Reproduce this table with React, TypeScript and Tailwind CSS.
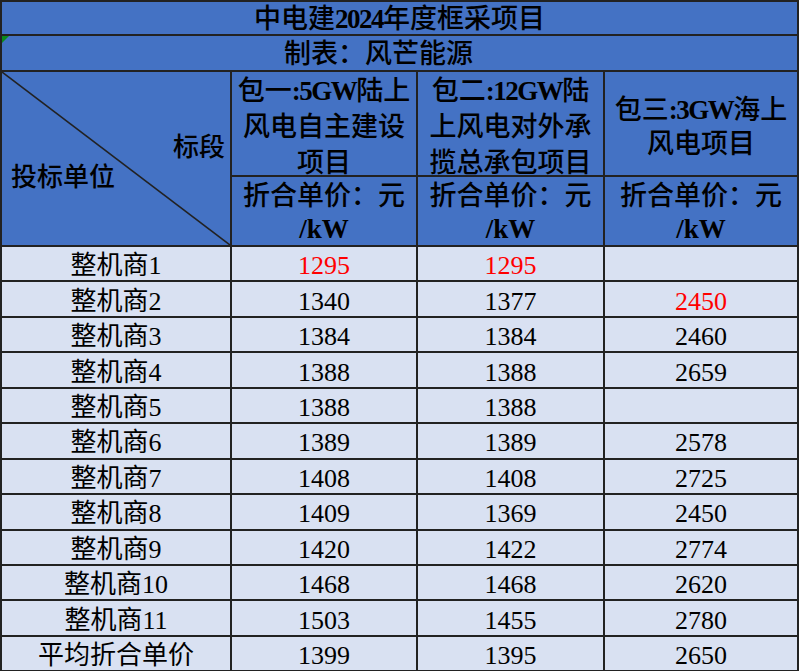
import React from 'react';

const rows: { name: string; a: string; b: string; c: string; red?: ('a' | 'b' | 'c')[] }[] = [
  { name: '整机商1', a: '1295', b: '1295', c: '', red: ['a', 'b'] },
  { name: '整机商2', a: '1340', b: '1377', c: '2450', red: ['c'] },
  { name: '整机商3', a: '1384', b: '1384', c: '2460' },
  { name: '整机商4', a: '1388', b: '1388', c: '2659' },
  { name: '整机商5', a: '1388', b: '1388', c: '' },
  { name: '整机商6', a: '1389', b: '1389', c: '2578' },
  { name: '整机商7', a: '1408', b: '1408', c: '2725' },
  { name: '整机商8', a: '1409', b: '1369', c: '2450' },
  { name: '整机商9', a: '1420', b: '1422', c: '2774' },
  { name: '整机商10', a: '1468', b: '1468', c: '2620' },
  { name: '整机商11', a: '1503', b: '1455', c: '2780' },
  { name: '平均折合单价', a: '1399', b: '1395', c: '2650' },
];

const font = "font-['Liberation_Serif','Noto_Sans_CJK_SC',serif]";

// latin bits in the header stay bold, CJK gets a lighter weight
function L({ children }: { children: React.ReactNode }) {
  return <span className="font-bold tracking-[-1.5px]">{children}</span>;
}

export default function App() {
  return (
    <div className={`w-[800px] h-[671px] overflow-hidden bg-white text-black ${font}`}>
      <div className="grid w-[799px] gap-[2px] bg-[#222] p-[2px] grid-cols-[228px_184px_185px_192px] grid-rows-[32px_34px_103px_68px_repeat(12,33.45px)]">
        {/* title rows */}
        <div className="col-span-4 flex items-center justify-center bg-[#4472c4] pt-[3px] text-[27px] font-medium leading-none">
          中电建<L>2024</L>年度框采项目
        </div>
        <div className="relative col-span-4 flex items-center justify-center bg-[#4472c4] pr-[42px] pt-[3px] text-[27px] font-medium leading-none">
          <span className="absolute left-0 top-0 h-0 w-0 border-r-[7px] border-t-[7px] border-r-transparent border-t-[#0a8a1a]"></span>
          制表：风芒能源
        </div>

        {/* header */}
        <div className="relative row-span-2 flex flex-col justify-center bg-[#4472c4] text-[26px] font-medium leading-[30px]">
          <svg className="absolute inset-0 h-full w-full" preserveAspectRatio="none" viewBox="0 0 228 173">
            <line x1="0" y1="0" x2="228" y2="173" stroke="#222" strokeWidth="1.6" />
          </svg>
          <span className="mt-[8px] self-end pr-[5px]">标段</span>
          <span className="self-start pl-[9px]">投标单位</span>
        </div>
        <div className="flex flex-col items-center justify-center bg-[#4472c4] pt-[6px] text-[27px] font-medium leading-[36px] whitespace-nowrap">
          <span>包一<L>:5GW</L>陆上</span>
          <span>风电自主建设</span>
          <span>项目</span>
        </div>
        <div className="flex flex-col items-center justify-center bg-[#4472c4] pt-[6px] text-[27px] font-medium leading-[36px] whitespace-nowrap">
          <span>包二<L>:12GW</L>陆</span>
          <span>上风电对外承</span>
          <span>揽总承包项目</span>
        </div>
        <div className="flex flex-col items-center justify-center bg-[#4472c4] pt-[6px] text-[27px] font-medium leading-[34px] whitespace-nowrap">
          <span>包三<L>:3GW</L>海上</span>
          <span>风电项目</span>
        </div>
        {[0, 1, 2].map((i) => (
          <div key={i} className="flex flex-col items-center justify-center bg-[#4472c4] pt-[4px] text-[27px] font-medium leading-[33px] whitespace-nowrap">
            <span>折合单价：元</span>
            <span className="font-bold">/kW</span>
          </div>
        ))}

        {/* data */}
        {rows.map((r) => (
          <React.Fragment key={r.name}>
            <div className="flex items-center justify-center bg-[#d9e1f2] pt-[5px] text-[26px] leading-none">{r.name}</div>
            <div className={`flex items-center justify-center bg-[#d9e1f2] pt-[5px] text-[26px] leading-none ${r.red?.includes('a') ? 'text-[#ff0000]' : ''}`}>{r.a}</div>
            <div className={`flex items-center justify-center bg-[#d9e1f2] pt-[5px] text-[26px] leading-none ${r.red?.includes('b') ? 'text-[#ff0000]' : ''}`}>{r.b}</div>
            <div className={`flex items-center justify-center bg-[#d9e1f2] pt-[5px] text-[26px] leading-none ${r.red?.includes('c') ? 'text-[#ff0000]' : ''}`}>{r.c}</div>
          </React.Fragment>
        ))}
      </div>
    </div>
  );
}
